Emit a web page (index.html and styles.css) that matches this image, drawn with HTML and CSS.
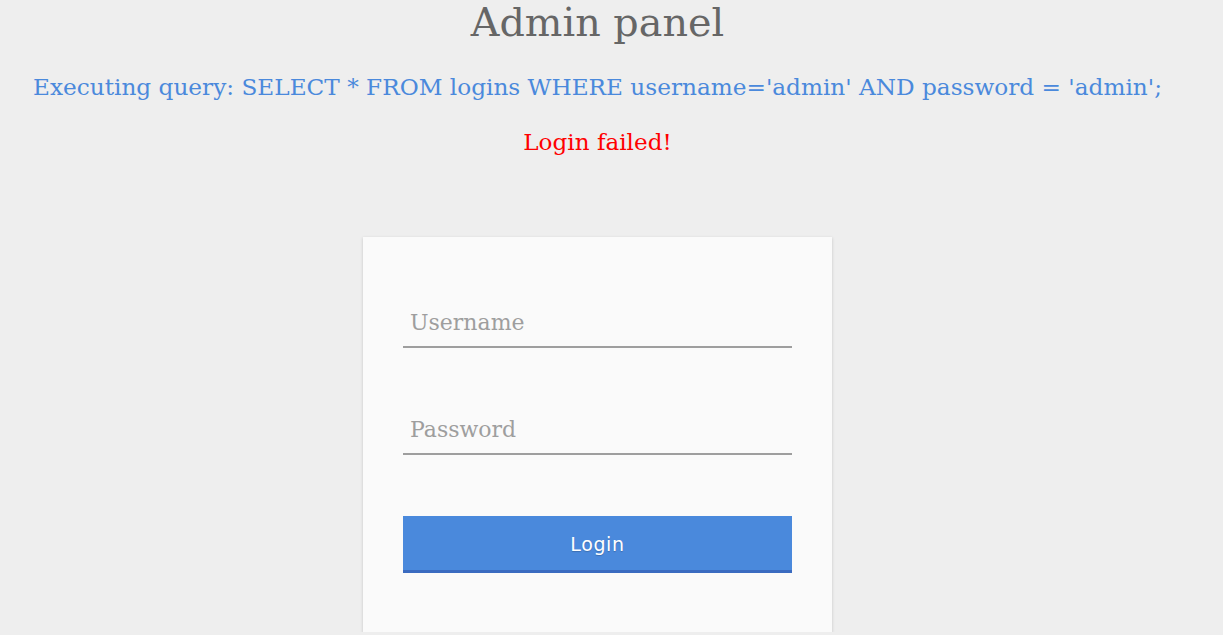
FILE: index.html
```html
<!DOCTYPE html>
<html>
<head>
<meta charset="utf-8">
<title>Admin panel</title>
<link rel="stylesheet" href="styles.css">
</head>
<body>
<main class="page">
  <h1 class="title">Admin panel</h1>
  <p class="query">Executing query: SELECT * FROM logins WHERE username='admin' AND password = 'admin';</p>
  <p class="error">Login failed!</p>
  <form class="card">
    <input class="field" type="text" placeholder="Username">
    <input class="field" type="password" placeholder="Password">
    <button class="btn" type="button">Login</button>
  </form>
</main>
</body>
</html>
```
FILE: styles.css
```css
html, body {
  margin: 0;
  padding: 0;
  background: #eeeeee;
}
body {
  font-family: "DejaVu Serif", serif;
  overflow: hidden;
}
.page {
  width: 1195px;
  display: flex;
  flex-direction: column;
  align-items: center;
  text-align: center;
}
.title {
  margin: 0;
  font-size: 39.7px;
  font-weight: normal;
  line-height: 44px;
  color: #666666;
}
.query {
  margin: 29px 0 0;
  font-size: 23.2px;
  line-height: 28px;
  color: #4a89dc;
  white-space: nowrap;
}
.error {
  margin: 27px 0 0;
  font-size: 23.1px;
  line-height: 28px;
  color: #ff0000;
}
.card {
  margin-top: 81px;
  height: 395px;
  box-sizing: border-box;
  width: 469px;
  padding: 73px 40px 0;
  background: #fafafa;
  box-shadow: 0 1px 3px rgba(0,0,0,0.18);
  display: flex;
  flex-direction: column;
}
.field {
  display: block;
  width: 100%;
  box-sizing: border-box;
  height: 38px;
  border: none;
  border-bottom: 2px solid #9e9e9e;
  background: transparent;
  font-family: "DejaVu Serif", serif;
  font-size: 22px;
  line-height: 24px;
  color: #333;
  padding: 0 7px 12px;
  outline: none;
  margin: 0;
}
.field + .field {
  margin-top: 69px;
}
.field::placeholder {
  color: #9e9e9e;
}
.btn {
  margin-top: 61px;
  height: 57px;
  width: 100%;
  padding: 1px 0 0;
  border: none;
  border-bottom: 3px solid #3a6bc0;
  background: #4a89dc;
  color: #ffffff;
  font-family: "DejaVu Sans", sans-serif;
  font-size: 19px;
  letter-spacing: 0.6px;
  text-shadow: 0 1px 1px rgba(0,0,0,0.2);
  cursor: pointer;
}
```
